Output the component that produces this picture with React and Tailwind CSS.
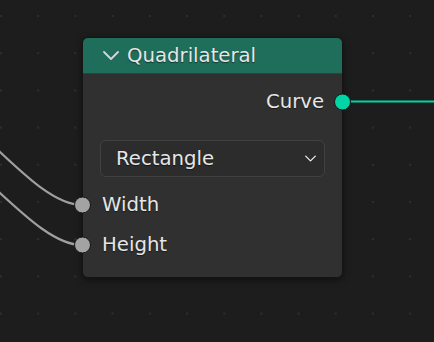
import { useState } from "react";

const font = { fontFamily: '"DejaVu Sans", "Liberation Sans", sans-serif' };

function Socket({ color, side }) {
    return (
        <span
            className={`absolute top-1/2 -translate-y-1/2 w-[17px] h-[17px] rounded-full border border-[#161616] ${color} ${side}`}
        />
    );
}

function Chevron({ className }) {
    return (
        <svg className={className} viewBox="0 0 16 9" fill="none">
            <path d="M1 1 L8 8 L15 1" stroke="currentColor" strokeWidth="1.8" strokeLinecap="round" strokeLinejoin="round" />
        </svg>
    );
}

function App()
{
    const [shape] = useState("Rectangle");

    return (
        <div className="relative w-[434px] h-[342px] overflow-hidden bg-[#1d1d1d] text-[#e6e6e6] text-[19.7px] [text-shadow:0_1px_1px_rgba(0,0,0,0.5)]" style={font}>
            <svg className="absolute inset-0" width="434" height="342">
                <defs>
                    <pattern id="dots" x="0" y="15" width="37.2" height="37.2" patternUnits="userSpaceOnUse">
                        <rect x="0" y="0" width="2" height="2" fill="#2e2e2e" />
                    </pattern>
                </defs>
                <rect width="434" height="342" fill="url(#dots)" />
                <path d="M-82 99 C-31 99 31 205 82 205" stroke="#a0a0a0" strokeWidth="2.2" fill="none" />
                <path d="M-82 141 C-31 141 31 245 82 245" stroke="#a0a0a0" strokeWidth="2.2" fill="none" />
                <path d="M343 101.5 L434 101.5" stroke="#00d5a5" strokeWidth="2.2" fill="none" />
            </svg>

            <div className="absolute left-[82px] top-[37px] w-[261px] h-[241px] rounded-[6px] border border-[#151515] bg-[#303030] shadow-[0_2px_6px_rgba(0,0,0,0.5)]">
                <div className="h-[36px] flex items-center pl-[20px] gap-[8px] rounded-t-[5px] bg-[#1f6e5b] border-b border-[#1d4a40]">
                    <Chevron className="w-[16px] h-[9px] text-[#d6d6d6]" />
                    <span className="leading-none">Quadrilateral</span>
                </div>

                <div className="flex flex-col pt-[16px]">
                    <div className="relative h-[24px] flex items-center justify-end pr-[18px]">
                        <span>Curve</span>
                        <Socket color="bg-[#00d5a5]" side="-right-[9px]" />
                    </div>

                    <div className="mt-[26px] ml-[17px] mr-[17px] h-[37px] flex items-center justify-between pl-[15px] pr-[8px] rounded-[6px] border border-[#414141] bg-[#2c2c2c]">
                        <span>{shape}</span>
                        <Chevron className="w-[11px] h-[7px] text-[#f0f0f0]" />
                    </div>

                    <div className="relative mt-[16px] h-[24px] flex items-center pl-[19px]">
                        <Socket color="bg-[#a3a3a3]" side="-left-[9px]" />
                        <span>Width</span>
                    </div>
                    <div className="relative mt-[16px] h-[24px] flex items-center pl-[19px]">
                        <Socket color="bg-[#a3a3a3]" side="-left-[9px]" />
                        <span>Height</span>
                    </div>
                </div>
            </div>
        </div>
    );
}

export default App;
